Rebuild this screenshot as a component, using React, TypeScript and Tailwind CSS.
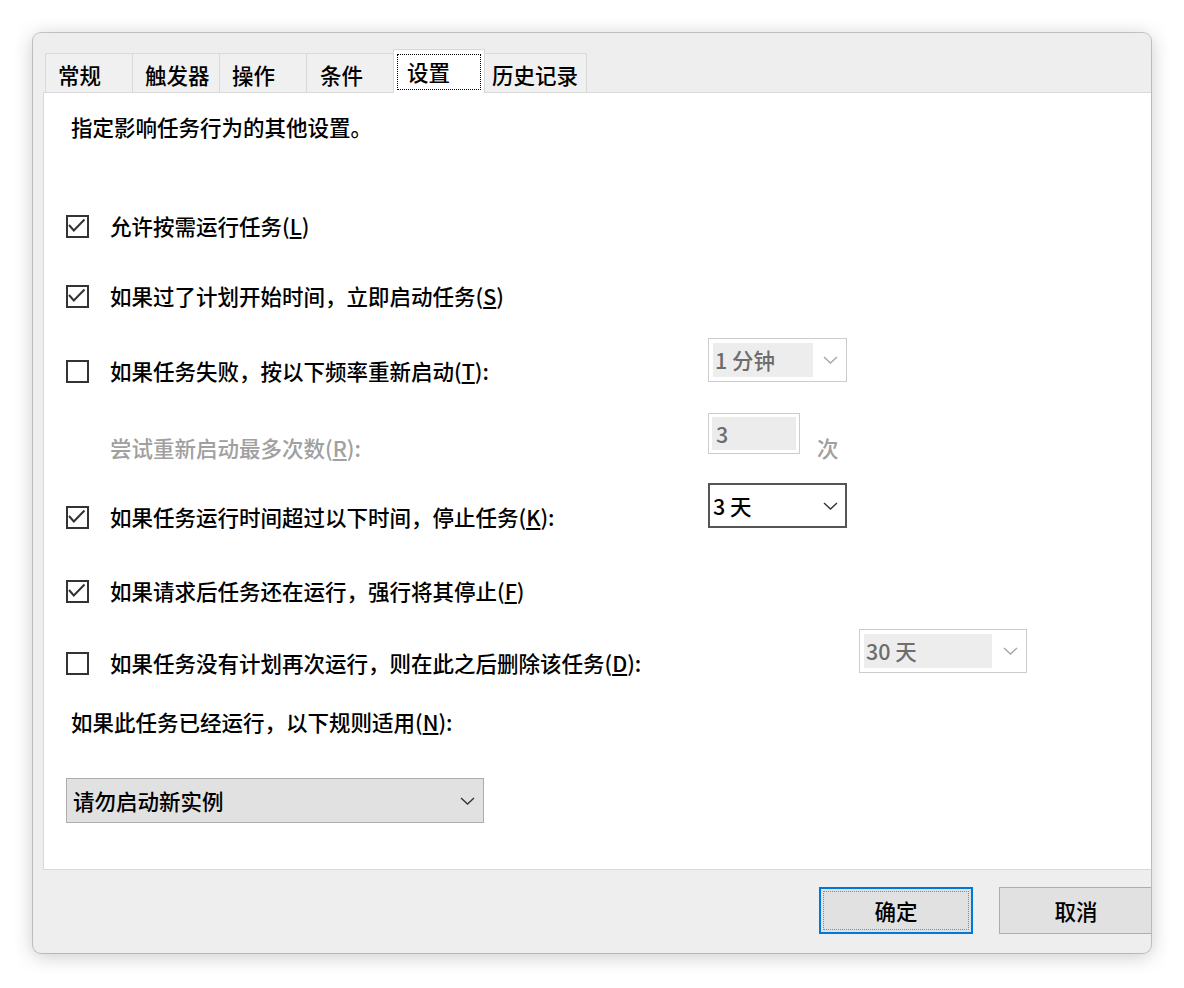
import React from "react";

const FONT = "font-['Noto_Sans_CJK_SC','Noto_Sans',sans-serif]";

function Chevron({ color }: { color: string }) {
  return (
    <svg width="15" height="8" viewBox="0 0 15 8" fill="none" stroke={color} strokeWidth="1.4">
      <path d="M1 1l6.5 6 6.5-6" />
    </svg>
  );
}

function CheckBox({ checked }: { checked: boolean }) {
  return (
    <div className="w-[23px] h-[23px] shrink-0 border-2 border-[#333333] bg-white flex items-start justify-start">
      {checked && (
        <svg width="19" height="19" viewBox="0 0 19 19" fill="none" stroke="#333333" strokeWidth="2">
          <path d="M1 8l4.8 5.5L16.5 2.5" />
        </svg>
      )}
    </div>
  );
}

// disabled combo box: grey text in a shaded selection block
function DisabledCombo({ text, w, inner, className }: { text: string; w: string; inner: string; className: string }) {
  return (
    <div className={`${w} ${className} h-[44px] shrink-0 border border-[#cccccc] bg-white flex items-center pl-[4px] pr-[8px]`}>
      <div className={`${inner} h-[34px] bg-[#ededed] text-[#6d6d6d] flex items-center pl-[2px]`}>{text}</div>
      <div className="ml-auto flex items-center">
        <Chevron color="#a6a6a6" />
      </div>
    </div>
  );
}

function Tab({ label, w, pl }: { label: string; w: string; pl: string }) {
  return (
    <div className={`${w} ${pl} h-[39px] -ml-px first:ml-0 shrink-0 bg-[#f0f0f0] border border-b-0 border-[#d9d9d9] flex items-center pt-[3px]`}>
      {label}
    </div>
  );
}

export default function App() {
  return (
    <div className={`${FONT} w-[1184px] h-[988px] bg-white pl-[33px] pt-[33px] text-[21.5px] font-medium text-black leading-none`}>
      <div className="w-[1118px] h-[920px] rounded-[8px] overflow-hidden bg-[#eeeeee] shadow-[0_0_0_1px_rgba(0,0,0,0.18),0_3px_20px_rgba(0,0,0,0.22)]">
        {/* tab strip */}
        <div className="mt-[16px] ml-[12px] h-[43px] flex items-end">
          <Tab label="常规" w="w-[88px]" pl="pl-[12px]" />
          <Tab label="触发器" w="w-[88px]" pl="pl-[12px]" />
          <Tab label="操作" w="w-[88px]" pl="pl-[12px]" />
          <Tab label="条件" w="w-[88px]" pl="pl-[13px]" />
          <div className="w-[92px] h-[44px] -ml-px -mb-px relative z-10 shrink-0 bg-white border border-b-0 border-[#d9d9d9] pt-[4px] px-[3px] pb-[3px]">
            <div className="h-full border border-dotted border-black flex items-center pl-[9px]">设置</div>
          </div>
          <Tab label="历史记录" w="w-[103px]" pl="pl-[7px]" />
        </div>

        {/* settings panel */}
        <div className="ml-[10px] w-[1130px] h-[778px] bg-white border border-[#d9d9d9]">
          <div className="flex flex-col pl-[22px]">
            <div className="mt-[19px] h-[30px] flex items-center pl-[5px]">指定影响任务行为的其他设置。</div>

            <div className="mt-[69px] h-[30px] flex items-center">
              <CheckBox checked />
              <span className="ml-[21px]">
                允许按需运行任务(<span className="underline underline-offset-2">L</span>)
              </span>
            </div>

            <div className="mt-[40px] h-[30px] flex items-center">
              <CheckBox checked />
              <span className="ml-[21px]">
                如果过了计划开始时间，立即启动任务(<span className="underline underline-offset-2">S</span>)
              </span>
            </div>

            <div className="mt-[45px] h-[30px] flex items-start">
              <div className="w-[642px] h-[30px] flex items-center shrink-0">
                <CheckBox checked={false} />
                <span className="ml-[21px]">
                  如果任务失败，按以下频率重新启动(<span className="underline underline-offset-2">T</span>):
                </span>
              </div>
              <DisabledCombo text="1 分钟" w="w-[139px]" inner="w-[100px]" className="-mt-[18px]" />
            </div>

            <div className="mt-[47px] h-[30px] flex items-start">
              <div className="w-[642px] h-[30px] flex items-center shrink-0 pl-[44px] text-[#a0a0a0]">
                尝试重新启动最多次数(<span className="underline underline-offset-2">R</span>):
              </div>
              <div className="-mt-[20px] w-[92px] h-[41px] shrink-0 border border-[#cccccc] bg-white p-[3px]">
                <div className="h-full bg-[#ececec] text-[#6d6d6d] flex items-center pl-[4px]">3</div>
              </div>
              <div className="ml-[17px] h-[30px] flex items-center text-[#a0a0a0]">次</div>
            </div>

            <div className="mt-[39px] h-[30px] flex items-start">
              <div className="w-[642px] h-[30px] flex items-center shrink-0">
                <CheckBox checked />
                <span className="ml-[21px]">
                  如果任务运行时间超过以下时间，停止任务(<span className="underline underline-offset-2">K</span>):
                </span>
              </div>
              <div className="-mt-[19px] w-[139px] h-[45px] shrink-0 border-2 border-[#555555] bg-white flex items-center pl-[3px] pr-[7px]">
                <span>3 天</span>
                <div className="ml-auto flex items-center">
                  <Chevron color="#333333" />
                </div>
              </div>
            </div>

            <div className="mt-[44px] h-[30px] flex items-center">
              <CheckBox checked />
              <span className="ml-[21px]">
                如果请求后任务还在运行，强行将其停止(<span className="underline underline-offset-2">F</span>)
              </span>
            </div>

            <div className="mt-[42px] h-[30px] flex items-start">
              <div className="w-[793px] h-[30px] flex items-center shrink-0">
                <CheckBox checked={false} />
                <span className="ml-[21px]">
                  如果任务没有计划再次运行，则在此之后删除该任务(<span className="underline underline-offset-2">D</span>):
                </span>
              </div>
              <DisabledCombo text="30 天" w="w-[168px]" inner="w-[128px]" className="-mt-[19px]" />
            </div>

            <div className="mt-[29px] h-[30px] flex items-center pl-[5px]">
              如果此任务已经运行，以下规则适用(<span className="underline underline-offset-2">N</span>):
            </div>

            <div className="mt-[41px] w-[418px] h-[45px] bg-[#e1e1e1] border border-[#adadad] flex items-center pl-[6px] pr-[8px]">
              <span>请勿启动新实例</span>
              <div className="ml-auto flex items-center">
                <Chevron color="#333333" />
              </div>
            </div>
          </div>
        </div>

        {/* dialog buttons */}
        <div className="mt-[17px] ml-[786px] flex gap-[26px]">
          <div className="w-[154px] h-[47px] shrink-0 bg-[#e1e1e1] border-2 border-[#0078d7] p-[2px]">
            <div className="h-full border border-dotted border-[#6f8fb5] flex items-center justify-center">确定</div>
          </div>
          <div className="w-[154px] h-[47px] shrink-0 bg-[#e1e1e1] border border-[#adadad] flex items-center justify-center">
            取消
          </div>
        </div>
      </div>
    </div>
  );
}
